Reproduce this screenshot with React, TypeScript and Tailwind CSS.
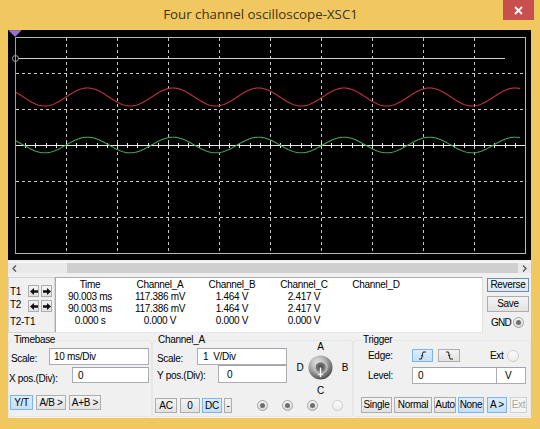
import React from "react";

function Scope() {
  const wave = (cy: number, amp: number, x0: number, x1: number) => {
    let d = "";
    for (let x = x0; x <= x1; x += 1) {
      const y = cy - amp * Math.cos((2 * Math.PI * (x - 79.5)) / 85.5);
      d += (x === x0 ? "M" : "L") + x + " " + y.toFixed(2) + " ";
    }
    return d;
  };
  const vx = [1, 2, 3, 4, 5, 6, 7, 8, 9].map((k) => 7 + 51 * k + 0.5);
  const hy = [1, 2, 4, 5].map((k) => 7 + 36 * k + 0.5);
  const ticks: number[] = [];
  for (let i = 1; i < 50; i++) ticks.push(Math.round(7 + 10.2 * i) + 0.5);
  return (
    <svg width="523" height="230" viewBox="0 0 523 230" className="block bg-black">
      <rect x="7.5" y="7.5" width="510" height="216" fill="none" stroke="#b8b8b8" strokeWidth="1" />
      {vx.map((x) => (
        <line key={"v" + x} x1={x} y1={8} x2={x} y2={223} stroke="#c8c8c8" strokeWidth="1" strokeDasharray="3 3" />
      ))}
      {hy.map((y) => (
        <line key={"h" + y} x1={8} y1={y} x2={517} y2={y} stroke="#c8c8c8" strokeWidth="1" strokeDasharray="3 3" />
      ))}
      <line x1={8} y1={115.5} x2={517} y2={115.5} stroke="#e8e8e8" strokeWidth="1" />
      {ticks.map((x) => (
        <line key={"t" + x} x1={x} y1={113} x2={x} y2={118} stroke="#e8e8e8" strokeWidth="1" />
      ))}
      <path d={wave(67, 9, 7, 512)} fill="none" stroke="#c3304a" strokeWidth="1.1" />
      <path d={wave(115, 7.8, 7, 512)} fill="none" stroke="#45a05e" strokeWidth="1.1" />
      <line x1={7} y1={28.5} x2={497} y2={28.5} stroke="#cfcfcf" strokeWidth="1.2" />
      <circle cx={7.5} cy={28.5} r={3} fill="#000" stroke="#a8a8a8" strokeWidth="1" />
      <line x1={7.5} y1={7} x2={7.5} y2={223} stroke="#6cc46c" strokeWidth="1" />
      <polygon points="1,0.5 13,0.5 7,6.5" fill="#9272d6" stroke="#b8a0f0" strokeWidth="0.5" />
    </svg>
  );
}

function Knob() {
  return (
    <svg width="25" height="25" viewBox="0 0 26 26" className="block">
      <defs>
        <radialGradient id="kg" cx="38%" cy="30%" r="80%">
          <stop offset="0" stopColor="#eeeeee" />
          <stop offset="0.45" stopColor="#a8a8a8" />
          <stop offset="1" stopColor="#3e3e3e" />
        </radialGradient>
        <radialGradient id="kh" cx="50%" cy="50%" r="50%">
          <stop offset="0" stopColor="#4a4a4a" />
          <stop offset="1" stopColor="#7c7c7c" />
        </radialGradient>
      </defs>
      <circle cx="13" cy="13" r="12.5" fill="url(#kg)" />
      <circle cx="13" cy="12.5" r="7" fill="none" stroke="#c8c8c8" strokeWidth="1.2" opacity="0.8" />
      <circle cx="13" cy="12.5" r="5" fill="url(#kh)" />
      <line x1="13" y1="13" x2="13" y2="23" stroke="#ffffff" strokeWidth="1.4" />
      <line x1="10" y1="20.5" x2="16" y2="20.5" stroke="#ffffff" strokeWidth="1" />
    </svg>
  );
}

function Radio({ filled, light, className }: { filled?: boolean; light?: boolean; className?: string }) {
  return (
    <div
      className={
        "w-[11px] h-[11px] rounded-full border flex items-center justify-center shrink-0 " +
        (light
          ? "border-[#cdcdcd] bg-linear-to-b from-[#fbfbfb] to-[#ececec] "
          : "border-[#a4a4a4] bg-linear-to-b from-[#f6f6f6] to-[#d8d8d8] ") +
        (className ?? "")
      }
    >
      {filled && <div className="w-[5px] h-[5px] rounded-full bg-[#6f6f6f]" />}
    </div>
  );
}

function Btn({
  children,
  className,
  active,
  disabled,
}: {
  children?: React.ReactNode;
  className?: string;
  active?: boolean;
  disabled?: boolean;
}) {
  const look = active
    ? "border-[#7eb4ea] bg-linear-to-b from-[#dcecfc] to-[#c4e0f8] text-black"
    : disabled
    ? "border-[#d2d2d2] bg-[#f4f4f4] text-[#a8a8a8]"
    : "border-[#adadad] bg-linear-to-b from-[#f3f3f3] to-[#e2e2e2] text-black";
  return (
    <div className={"flex items-center justify-center border shrink-0 leading-none " + look + " " + (className ?? "")}>
      {children}
    </div>
  );
}

function Field({ children, className }: { children?: React.ReactNode; className?: string }) {
  return (
    <div
      className={
        "bg-white border border-[#abadb3] border-t-[#a0a3aa] flex items-center shrink-0 whitespace-pre " + (className ?? "")
      }
    >
      {children}
    </div>
  );
}

function ArrowL() {
  return (
    <svg width="8" height="7" viewBox="0 0 8 7" className="block">
      <polygon points="0,3.5 4,0 4,2.3 8,2.3 8,4.7 4,4.7 4,7" fill="#111" />
    </svg>
  );
}
function ArrowR() {
  return (
    <svg width="8" height="7" viewBox="0 0 8 7" className="block">
      <polygon points="8,3.5 4,0 4,2.3 0,2.3 0,4.7 4,4.7 4,7" fill="#111" />
    </svg>
  );
}

function EdgeUp() {
  return (
    <svg width="9" height="9" viewBox="0 0 9 9" className="block">
      <polyline points="1,8 3.5,8 5,1 8,1" fill="none" stroke="#222" strokeWidth="1" />
      <polyline points="3,5 4.3,4 5,5.5" fill="none" stroke="#222" strokeWidth="0.9" />
    </svg>
  );
}
function EdgeDown() {
  return (
    <svg width="9" height="9" viewBox="0 0 9 9" className="block">
      <polyline points="1,1 3.5,1 5,8 8,8" fill="none" stroke="#222" strokeWidth="1" />
      <polyline points="3,4 4.3,5 5.2,3.6" fill="none" stroke="#222" strokeWidth="0.9" />
    </svg>
  );
}

export default function App() {
  const rows: string[][] = [
    ["Time", "Channel_A", "Channel_B", "Channel_C", "Channel_D"],
    ["90.003 ms", "117.386 mV", "1.464 V", "2.417 V", ""],
    ["90.003 ms", "117.386 mV", "1.464 V", "2.417 V", ""],
    ["0.000 s", "0.000 V", "0.000 V", "0.000 V", ""],
  ];
  return (
    <div className="w-[540px] h-[429px] bg-[#f1c85f] overflow-hidden flex flex-col font-['Liberation_Sans',Arial,sans-serif] text-[10px] tracking-[-0.3px] text-black">
      {/* title bar */}
      <div className="h-[30px] flex shrink-0">
        <div className="flex-1 pl-[18px] flex items-center justify-center h-[30px]">
          <span className="font-['Open_Sans',sans-serif] text-[13.3px] tracking-normal text-[#3a3218] pb-[1px]">
            Four channel oscilloscope-XSC1
          </span>
        </div>
        <div className="w-[31px] h-[20px] mr-[6px] bg-[#c94f4f] flex items-center justify-center">
          <svg width="9" height="9" viewBox="0 0 9 9" className="block">
            <line x1="1" y1="1" x2="8" y2="8" stroke="#fff" strokeWidth="1.8" />
            <line x1="8" y1="1" x2="1" y2="8" stroke="#fff" strokeWidth="1.8" />
          </svg>
        </div>
      </div>

      {/* client area */}
      <div className="ml-[8px] w-[523px] h-[388px] bg-[#f0f0f0] flex flex-col shrink-0">
        <Scope />

        {/* scrollbar */}
        <div className="mt-[2px] h-[11px] flex bg-[#e9e9e9] border-t border-t-[#fafafa]">
          <div className="w-[12px] flex items-center justify-center">
            <svg width="5" height="7" viewBox="0 0 5 7" className="block">
              <polyline points="4,0.5 1,3.5 4,6.5" fill="none" stroke="#555" strokeWidth="1.3" />
            </svg>
          </div>
          <div className="w-[47px]" />
          <div className="flex-1 bg-[#cfcfcf]" />
          <div className="w-[13px] flex items-center justify-center">
            <svg width="5" height="7" viewBox="0 0 5 7" className="block">
              <polyline points="1,0.5 4,3.5 1,6.5" fill="none" stroke="#555" strokeWidth="1.3" />
            </svg>
          </div>
        </div>

        {/* data row */}
        <div className="flex mt-[4px] h-[56px]">
          <div className="w-[47px] h-[56px] border border-[#d6d6d6] flex flex-col">
            <div className="mt-[7px] h-[12px] flex items-center">
              <span className="ml-[1px] w-[18px]">T1</span>
              <Btn className="w-[11px] h-[12px]">
                <ArrowL />
              </Btn>
              <Btn className="ml-[2px] w-[11px] h-[12px]">
                <ArrowR />
              </Btn>
            </div>
            <div className="mt-[3px] h-[12px] flex items-center">
              <span className="ml-[1px] w-[18px] -mt-[3px]">T2</span>
              <Btn className="w-[11px] h-[12px]">
                <ArrowL />
              </Btn>
              <Btn className="ml-[2px] w-[11px] h-[12px]">
                <ArrowR />
              </Btn>
            </div>
            <div className="mt-[4px] h-[12px] leading-[12px] ml-[1px]">T2-T1</div>
          </div>
          <div className="w-[428px] h-[56px] bg-white border border-[#aaaaaa] border-r-[#e0e0e0] border-b-[#e8e8e8]">
            <div className="grid grid-cols-[68px_72px_72px_72px_72px] leading-[12px] pt-[1px] text-center whitespace-nowrap">
              {rows.map((r, i) =>
                r.map((c, j) => (
                  <div key={i + "-" + j} className="h-[12px]">
                    {c}
                  </div>
                ))
              )}
            </div>
          </div>
          <div className="ml-[4px] w-[42px] flex flex-col">
            <div className="mt-[1px] h-[14px] w-[42px] border border-[#6c8db0] bg-linear-to-b from-[#eef4fa] to-[#dce6ef] flex items-center justify-center leading-none">
              Reverse
            </div>
            <Btn className="mt-[4px] h-[16px] w-[42px]">Save</Btn>
            <div className="mt-[3px] h-[14px] flex items-center">
              <span className="ml-[4px] tracking-[-0.7px]">GND</span>
              <Radio filled className="ml-auto mr-[5px]" />
            </div>
          </div>
        </div>

        {/* groups row */}
        <div className="flex h-[85px] pt-[1px]">
          {/* Timebase */}
          <fieldset className="w-[144px] h-[83px] border border-[#e6e6e6] rounded-[3px] shrink-0">
            <legend className="ml-[3px] px-[2px] leading-[12px]">Timebase</legend>
            <div className="flex items-center mt-[2px] h-[17px]">
              <span className="ml-[2px] mt-[4px]">Scale:</span>
              <Field className="ml-auto mr-[2px] w-[100px] h-[17px] pl-[4px]">10 ms/Div</Field>
            </div>
            <div className="flex items-center mt-[2px] h-[16px]">
              <span className="mt-[6px]">X pos.(Div):</span>
              <Field className="ml-auto mr-[2px] w-[77px] h-[16px] pl-[5px]">0</Field>
            </div>
            <div className="flex items-center mt-[12px] h-[15px]">
              <Btn active className="ml-[1px] w-[23px] h-[15px]">
                Y/T
              </Btn>
              <Btn className="ml-[3px] w-[30px] h-[15px]">A/B &gt;</Btn>
              <Btn className="ml-[3px] w-[32px] h-[15px]">A+B &gt;</Btn>
            </div>
          </fieldset>

          {/* Channel_A */}
          <fieldset className="w-[201px] h-[83px] border border-[#e6e6e6] rounded-[3px] shrink-0">
            <legend className="ml-[3px] px-[2px] leading-[12px]">Channel_A</legend>
            <div className="flex items-start h-[51px]">
              <div className="flex flex-col w-[134px]">
                <div className="flex items-center mt-[2px] h-[17px]">
                  <span className="ml-[4px] w-[40px] mt-[3px]">Scale:</span>
                  <Field className="w-[90px] h-[17px] pl-[5px]">1  V/Div</Field>
                </div>
                <div className="flex items-center h-[18px]">
                  <span className="ml-[4px] w-[61px] mt-[2px]">Y pos.(Div):</span>
                  <Field className="w-[69px] h-[18px] pl-[8px]">0</Field>
                </div>
              </div>
              <div className="ml-[7px] -mt-[5px] flex flex-col">
                <div className="h-[12px] leading-[12px] ml-[14px] w-[25px] text-center">A</div>
                <div className="mt-[2px] h-[25px] flex items-center">
                  <span className="w-[12px] text-center">D</span>
                  <div className="ml-[2px]">
                    <Knob />
                  </div>
                  <span className="ml-[6px] w-[12px] text-center">B</span>
                </div>
                <div className="mt-[5px] h-[12px] leading-[12px] ml-[14px] w-[25px] text-center">C</div>
              </div>
            </div>
            <div className="flex items-center mt-[1px] h-[15px]">
              <Btn className="ml-[2px] w-[22px] h-[15px]">AC</Btn>
              <Btn className="ml-[3px] w-[20px] h-[15px]">0</Btn>
              <Btn active className="ml-[2px] w-[20px] h-[15px]">
                DC
              </Btn>
              <Btn className="ml-[2px] w-[8px] h-[15px]">-</Btn>
              <Radio filled className="ml-[25px]" />
              <Radio filled className="ml-[14px]" />
              <Radio filled className="ml-[14px]" />
              <Radio light className="ml-[14px]" />
            </div>
          </fieldset>

          {/* Trigger */}
          <fieldset className="w-[178px] h-[83px] border border-[#e6e6e6] rounded-[3px] shrink-0">
            <legend className="ml-[7px] px-[2px] leading-[12px]">Trigger</legend>
            <div className="flex items-center mt-[3px] h-[13px]">
              <span className="ml-[14px] w-[44px]">Edge:</span>
              <Btn active className="w-[21px] h-[13px]">
                <EdgeUp />
              </Btn>
              <Btn className="ml-[5px] w-[22px] h-[13px]">
                <EdgeDown />
              </Btn>
              <span className="ml-[30px]">Ext</span>
              <Radio light className="ml-[3px] w-[12px] h-[12px]" />
            </div>
            <div className="flex items-center mt-[5px] h-[17px]">
              <span className="ml-[14px] w-[44px]">Level:</span>
              <Field className="w-[85px] h-[17px] pl-[5px]">0</Field>
              <Field className="w-[29px] h-[17px] pl-[8px] border-l-0">V</Field>
            </div>
            <div className="flex items-center mt-[13px] h-[16px]">
              <Btn className="ml-[7px] w-[31px] h-[16px]">Single</Btn>
              <Btn className="ml-[2px] w-[38px] h-[16px]">Normal</Btn>
              <Btn className="ml-[2px] w-[22px] h-[16px]">Auto</Btn>
              <Btn active className="ml-[2px] w-[26px] h-[16px]">
                None
              </Btn>
              <Btn active className="ml-[3px] w-[20px] h-[16px]">
                A &gt;
              </Btn>
              <Btn disabled className="ml-[3px] w-[17px] h-[16px]">
                Ext
              </Btn>
            </div>
          </fieldset>
        </div>
      </div>
    </div>
  );
}
